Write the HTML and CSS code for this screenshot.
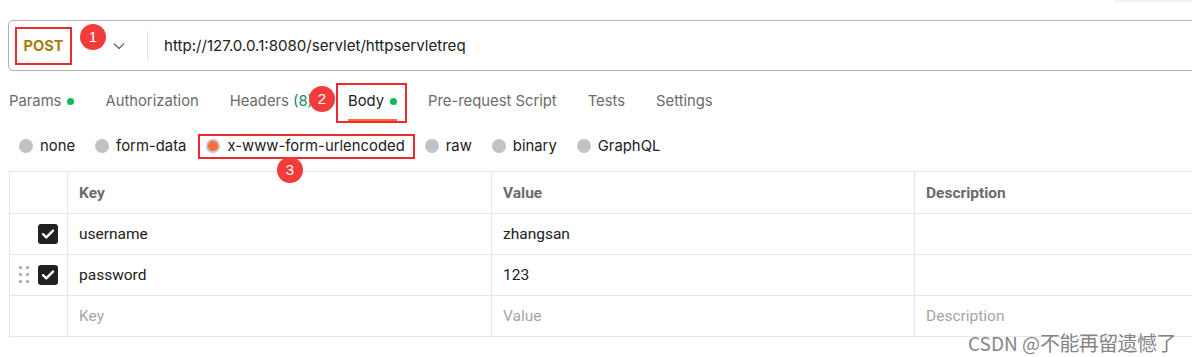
FILE: index.html
```html
<!DOCTYPE html>
<html lang="en">
<head>
<meta charset="utf-8">
<title>Postman request</title>
<link rel="stylesheet" href="styles.css">
</head>
<body>
<div class="page">
  <div class="corner"></div>

  <div class="urlbar">
    <div class="method"><span class="method-name">POST</span></div>
    <svg class="chevron" width="12" height="8" viewBox="0 0 12 8"><path d="M1 1.5 L6 6.5 L11 1.5" fill="none" stroke="#6b6b6b" stroke-width="1.3"/></svg>
    <div class="divider"></div>
    <div class="url">http://127.0.0.1:8080/servlet/httpservletreq</div>
  </div>

  <nav class="tabs">
    <span class="tab">Params<i class="dot"></i></span>
    <span class="tab">Authorization</span>
    <span class="tab">Headers&nbsp;<span class="count">(8)</span></span>
    <span class="tab active">Body<i class="dot"></i></span>
    <span class="tab">Pre-request Script</span>
    <span class="tab">Tests</span>
    <span class="tab">Settings</span>
  </nav>

  <div class="radios">
    <label class="radio"><span class="circle"></span>none</label>
    <label class="radio"><span class="circle"></span>form-data</label>
    <label class="radio selected"><span class="circle"></span>x-www-form-urlencoded</label>
    <label class="radio"><span class="circle"></span>raw</label>
    <label class="radio"><span class="circle"></span>binary</label>
    <label class="radio"><span class="circle"></span>GraphQL</label>
  </div>

  <table class="kv">
    <colgroup>
      <col class="c-check"><col class="c-key"><col class="c-value"><col class="c-desc">
    </colgroup>
    <thead>
      <tr><th></th><th>Key</th><th>Value</th><th>Description</th></tr>
    </thead>
    <tbody>
      <tr>
        <td class="check-cell"><span class="cb"><svg width="14" height="12" viewBox="0 0 14 12"><path d="M2 6.2 L5.3 9.4 L12 2.6" fill="none" stroke="#fff" stroke-width="2.4" stroke-linecap="round" stroke-linejoin="round"/></svg></span></td>
        <td>username</td><td>zhangsan</td><td></td>
      </tr>
      <tr>
        <td class="check-cell"><span class="grip"><i></i><i></i><i></i><i></i><i></i><i></i></span><span class="cb"><svg width="14" height="12" viewBox="0 0 14 12"><path d="M2 6.2 L5.3 9.4 L12 2.6" fill="none" stroke="#fff" stroke-width="2.4" stroke-linecap="round" stroke-linejoin="round"/></svg></span></td>
        <td>password</td><td>123</td><td></td>
      </tr>
      <tr class="placeholder">
        <td></td><td>Key</td><td>Value</td><td>Description</td>
      </tr>
    </tbody>
  </table>

  <span class="badge badge-1">1</span>
  <span class="badge badge-2">2</span>
  <span class="badge badge-3">3</span>

  <div class="watermark"><span class="wm-latin">CSDN @</span><span class="wm-cjk">不能再留遗憾了</span></div>
</div>
</body>
</html>
```
FILE: styles.css
```css
html, body {
  margin: 0;
  padding: 0;
  background: #ffffff;
}

.page {
  position: relative;
  width: 1192px;
  height: 357px;
  overflow: hidden;
  font-family: Inter, "Noto Sans", sans-serif;
  color: #212121;
}

.corner {
  position: absolute;
  top: 0;
  left: 1114px;
  width: 78px;
  height: 2px;
  background: #f2f2f2;
}

/* URL bar */
.urlbar {
  margin: 20px 0 0 8px;
  width: 1220px;
  height: 51px;
  box-sizing: border-box;
  border: 1px solid #b3b3b3;
  border-radius: 5px;
  display: flex;
  align-items: center;
}

.method {
  margin-left: 6px;
  width: 57px;
  height: 38px;
  box-sizing: border-box;
  border: 2px solid #ea2c2f;
  display: flex;
  align-items: center;
  justify-content: center;
}

.method-name {
  font-size: 14.6px;
  font-weight: 700;
  color: #a97c0a;
}

.chevron {
  margin-left: 41px;
  margin-top: 1px;
}

.divider {
  margin-left: 22px;
  width: 1px;
  height: 29px;
  background: #e3e3e3;
}

.url {
  margin-left: 16px;
  font-size: 15.1px;
  color: #212121;
}

/* Tabs */
.tabs {
  margin: 12px 0 0 9px;
  height: 40px;
  display: flex;
  gap: 31px;
}

.tab {
  position: relative;
  height: 38px;
  padding-bottom: 2px;
  box-sizing: border-box;
  display: flex;
  align-items: center;
  font-size: 14.8px;
  color: #6b6b6b;
  white-space: nowrap;
}

.tab .dot {
  display: inline-block;
  width: 7px;
  height: 7px;
  border-radius: 50%;
  background: #0cbb52;
  margin-left: 6px;
}

.tab .count {
  color: #138a6c;
  margin-right: 4px;
}

.tab.active {
  color: #212121;
}

.tab.active::after {
  content: "";
  position: absolute;
  left: 0;
  right: 0;
  bottom: 0;
  height: 2px;
  background: #ff6c37;
}

.tab.active::before {
  content: "";
  position: absolute;
  top: 0;
  bottom: -2px;
  left: -12px;
  right: -10px;
  border: 2px solid #ea2c2f;
}

/* Radios */
.radios {
  margin: 11px 0 0 19px;
  height: 24px;
  display: flex;
  align-items: center;
  gap: 20px;
}

.radio {
  position: relative;
  display: flex;
  align-items: center;
  gap: 7px;
  font-size: 14.85px;
  color: #212121;
  height: 24px;
}

.circle {
  width: 14px;
  height: 14px;
  border-radius: 50%;
  background: #c2c2c2;
  box-sizing: border-box;
}

.radio.selected .circle {
  background: #ff6c37;
  border: 2px solid #c2c2c2;
}

.radio.selected::before {
  content: "";
  position: absolute;
  top: 0;
  bottom: -1px;
  left: -8px;
  right: -10px;
  border: 2px solid #ea2c2f;
}

/* Table */
.kv {
  margin: 13px 0 0 9px;
  border-collapse: collapse;
  table-layout: fixed;
  width: 1210px;
  font-family: Roboto, "Noto Sans", sans-serif;
  font-size: 15.5px;
}

.c-check { width: 58px; }
.c-key { width: 424px; }
.c-value { width: 423px; }
.c-desc { width: 305px; }

.kv th, .kv td {
  border: 1px solid #e6e6e6;
  padding: 0 11px;
  text-align: left;
  white-space: nowrap;
}

.kv th {
  height: 41px;
  font-weight: 700;
  color: #6b6b6b;
}

.kv td {
  height: 40px;
  color: #212121;
}

.kv tr.placeholder td {
  color: #a6a6a6;
}

.check-cell {
  position: relative;
}

.cb {
  position: absolute;
  left: 28px;
  top: 50%;
  margin-top: -10px;
  width: 20px;
  height: 20px;
  border-radius: 3px;
  background: #212121;
  display: flex;
  align-items: center;
  justify-content: center;
}

.grip {
  position: absolute;
  left: 9px;
  top: 50%;
  margin-top: -9px;
  width: 10px;
  display: grid;
  grid-template-columns: 3px 3px;
  column-gap: 4px;
  row-gap: 4px;
}

.grip i {
  width: 3px;
  height: 3px;
  border-radius: 50%;
  background: #a0a0a0;
}

/* Annotation badges */
.badge {
  position: absolute;
  width: 26px;
  height: 26px;
  border-radius: 50%;
  background: #f23b3b;
  color: #ffffff;
  font-family: "Liberation Sans", Arial, sans-serif;
  font-size: 15px;
  line-height: 26px;
  text-align: center;
}

.badge-1 { left: 80px; top: 24px; }
.badge-2 { left: 309px; top: 86px; }
.badge-3 { left: 277px; top: 157px; }

.watermark {
  position: absolute;
  left: 968px;
  top: 331px;
  font-family: "Noto Sans CJK SC", sans-serif;
  line-height: 24px;
  color: rgba(110, 110, 110, 0.85);
  white-space: nowrap;
}

.wm-latin {
  font-size: 19px;
}

.wm-cjk {
  font-size: 20px;
  letter-spacing: -0.6px;
}
```
